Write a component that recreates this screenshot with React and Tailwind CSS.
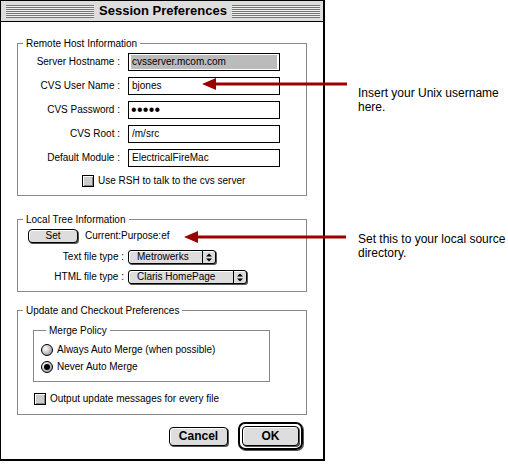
import React from 'react';

const Field = ({ label, children }) => (
  <div className="flex items-center h-[18px]">
    <div className="w-[102px] text-right whitespace-nowrap">{label}</div>
    <div className="ml-[8px] w-[152px] h-[18px] border border-black bg-white flex items-center px-[2px]">
      {children}
    </div>
  </div>
);

const Arrows = () => (
  <svg viewBox="0 0 10 11" className="w-[10px] h-[11px]">
    <polygon points="2,4.5 5,1.5 8,4.5" fill="#000" />
    <polygon points="2,6.5 5,9.5 8,6.5" fill="#000" />
  </svg>
);

const Popup = ({ label, value, width }) => (
  <div className="flex items-center h-[14px]">
    <div className="w-[106px] text-right whitespace-nowrap">{label}</div>
    <div className={`ml-[4px] ${width} h-[14px] flex border border-black rounded-[3px] bg-[#dddddd] shadow-[1px_1px_0_#555,inset_1px_1px_0_#fff]`}>
      <div className="flex-1 pl-[8px] leading-[12px] whitespace-nowrap">{value}</div>
      <div className="w-[13px] border-l border-black flex items-center justify-center">
        <Arrows />
      </div>
    </div>
  </div>
);

const Checkbox = () => (
  <div className="w-[12px] h-[12px] border border-black bg-[#cccccc] shadow-[inset_1px_1px_0_#fff,inset_-1px_-1px_0_#888]" />
);

const Radio = ({ on }) => (
  <div className="w-[12px] h-[12px] rounded-full border border-black bg-[radial-gradient(circle_at_35%_35%,#ffffff_0%,#cccccc_45%,#777777_100%)] flex items-center justify-center">
    {on && <div className="w-[6px] h-[6px] rounded-full bg-black" />}
  </div>
);

const TitleLines = () => (
  <div className="flex-1 h-[13px] bg-[repeating-linear-gradient(to_bottom,#777777_0px,#777777_1px,#eeeeee_1px,#eeeeee_2px)]" />
);

export default function App() {
  return (
    <div className="relative w-[508px] h-[465px] bg-white flex text-black text-[10px] leading-[14px] font-['Liberation_Sans',Arial,sans-serif]">
      {/* dialog window */}
      <div className="w-[325px] h-[461px] border-l border-t border-r-2 border-b-2 border-black bg-white flex flex-col">
        <div className="h-[21px] bg-[#dddddd] border-b border-black flex items-center pl-[5px] pr-[3px]">
          <TitleLines />
          <div className="px-[5px] text-[13px] font-bold leading-[20px] whitespace-nowrap">Session Preferences</div>
          <TitleLines />
        </div>

        <div className="pt-[15px] pl-[16px]">
          <fieldset className="w-[290px] border border-[#888888] pt-[3px] pb-[7px]">
            <legend className="ml-[5px] px-[3px] leading-[13px]">Remote Host Information</legend>
            <div className="flex flex-col gap-[6px]">
              <Field label="Server Hostname :">
                <div className="w-full h-[14px] bg-[#bbbbbb] leading-[14px] pl-[1px]">cvsserver.mcom.com</div>
              </Field>
              <Field label="CVS User Name :">
                <span className="pl-[1px]">bjones</span>
              </Field>
              <Field label="CVS Password :">
                <span className="text-[16px] leading-[14px] tracking-[0.3px]">•••••</span>
              </Field>
              <Field label="CVS Root :">
                <span className="pl-[1px]">/m/src</span>
              </Field>
              <Field label="Default Module :">
                <span className="pl-[1px]">ElectricalFireMac</span>
              </Field>
            </div>
            <div className="mt-[7px] h-[14px] flex items-center pl-[64px] gap-[4px]">
              <Checkbox />
              <span>Use RSH to talk to the cvs server</span>
            </div>
          </fieldset>

          <fieldset className="mt-[17px] w-[290px] border border-[#888888] pt-[3px] pb-[7px]">
            <legend className="ml-[5px] px-[3px] leading-[13px]">Local Tree Information</legend>
            <div className="flex items-center h-[14px] pl-[10px]">
              <div className="w-[50px] h-[14px] border border-black rounded-[4px] bg-[#dddddd] shadow-[1px_1px_0_#555,inset_1px_1px_0_#fff] flex items-center justify-center leading-[12px]">
                Set
              </div>
              <span className="ml-[7px]">Current:Purpose:ef</span>
            </div>
            <div className="mt-[7px]">
              <Popup label="Text file type :" value="Metrowerks" width="w-[88px]" />
            </div>
            <div className="mt-[6px]">
              <Popup label="HTML file type :" value="Claris HomePage" width="w-[119px]" />
            </div>
          </fieldset>

          <fieldset className="mt-[12px] w-[290px] border border-[#888888] pb-[8px]">
            <legend className="ml-[5px] px-[3px] leading-[13px]">Update and Checkout Preferences</legend>
            <fieldset className="mt-[7px] ml-[15px] w-[237px] border border-[#888888] pt-[6px] pb-[7px] pl-[7px]">
              <legend className="ml-[5px] px-[3px] leading-[13px]">Merge Policy</legend>
              <div className="flex items-center h-[14px] gap-[4px]">
                <Radio />
                <span>Always Auto Merge (when possible)</span>
              </div>
              <div className="mt-[3px] flex items-center h-[14px] gap-[4px]">
                <Radio on />
                <span>Never Auto Merge</span>
              </div>
            </fieldset>
            <div className="mt-[10px] h-[14px] flex items-center pl-[16px] gap-[4px]">
              <Checkbox />
              <span>Output update messages for every file</span>
            </div>
          </fieldset>
        </div>

        <div className="mt-[7px] flex items-center justify-end pr-[20px] gap-[10px]">
          <div className="w-[59px] h-[19px] border border-black rounded-[4px] bg-[#dddddd] shadow-[1px_1px_0_#555,inset_1px_1px_0_#fff] flex items-center justify-center text-[12px] font-bold leading-[16px]">
            Cancel
          </div>
          <div className="w-[65px] h-[28px] border-[2px] border-black rounded-[7px] p-[2px] shadow-[1px_1px_0_#555]">
            <div className="w-full h-full border border-black rounded-[4px] bg-[#dddddd] shadow-[1px_1px_0_#555,inset_1px_1px_0_#fff] flex items-center justify-center text-[12px] font-bold leading-[16px]">
              OK
            </div>
          </div>
        </div>
      </div>

      {/* notes */}
      <div className="pl-[33px] pt-[86px] text-[12px] leading-[14px] whitespace-nowrap">
        <p>
          Insert your Unix username
          <br />
          here.
        </p>
        <p className="mt-[118px]">
          Set this to your local source
          <br />
          directory.
        </p>
      </div>

      {/* callout arrows laid over the dialog */}
      <svg className="absolute inset-0 pointer-events-none" width="508" height="465" viewBox="0 0 508 465">
        <line x1="212" y1="84" x2="347" y2="84" stroke="#9b0000" strokeWidth="3" />
        <polygon points="202,84 216,78 216,90" fill="#9b0000" />
        <line x1="194" y1="237" x2="346" y2="237" stroke="#9b0000" strokeWidth="3" />
        <polygon points="184,237 198,231 198,243" fill="#9b0000" />
      </svg>
    </div>
  );
}
